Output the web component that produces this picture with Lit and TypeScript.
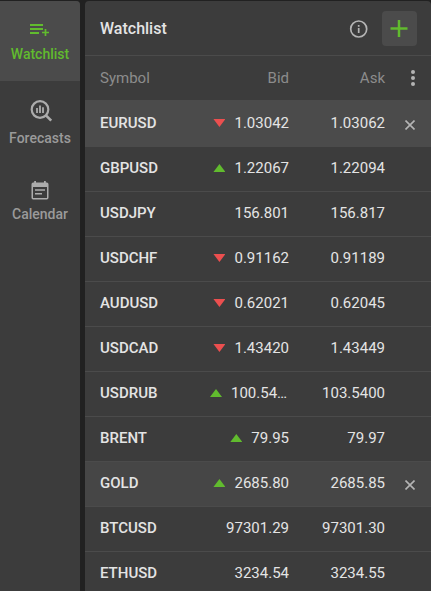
import { LitElement, html, css, svg, nothing } from "lit";
import { customElement, property } from "lit/decorators.js";

type Trend = "up" | "down" | "";

interface Quote {
  symbol: string;
  bid: string;
  ask: string;
  trend: Trend;
  state?: "selected" | "hovered";
}

const QUOTES: Quote[] = [
  { symbol: "EURUSD", bid: "1.03042", ask: "1.03062", trend: "down", state: "selected" },
  { symbol: "GBPUSD", bid: "1.22067", ask: "1.22094", trend: "up" },
  { symbol: "USDJPY", bid: "156.801", ask: "156.817", trend: "" },
  { symbol: "USDCHF", bid: "0.91162", ask: "0.91189", trend: "down" },
  { symbol: "AUDUSD", bid: "0.62021", ask: "0.62045", trend: "down" },
  { symbol: "USDCAD", bid: "1.43420", ask: "1.43449", trend: "down" },
  { symbol: "USDRUB", bid: "100.5400", ask: "103.5400", trend: "up" },
  { symbol: "BRENT", bid: "79.95", ask: "79.97", trend: "up" },
  { symbol: "GOLD", bid: "2685.80", ask: "2685.85", trend: "up", state: "hovered" },
  { symbol: "BTCUSD", bid: "97301.29", ask: "97301.30", trend: "" },
  { symbol: "ETHUSD", bid: "3234.54", ask: "3234.55", trend: "" },
];

const watchlistIcon = svg`<svg width="24" height="24" viewBox="0 0 24 24" fill="none" stroke="currentColor" aria-hidden="true">
  <path d="M2 7h13M2 11h13M2 15h9" stroke-width="2"/>
  <path d="M17.500 11v7M14 14.500h7" stroke-width="1.700"/></svg>`;

const forecastsIcon = svg`<svg width="28" height="28" viewBox="0 0 28 28" fill="none" stroke="currentColor" aria-hidden="true">
  <circle cx="14" cy="11.500" r="8.300" stroke-width="2.200"/>
  <path d="M19.700 17.200l5.500 5.500" stroke-width="2.600"/>
  <path d="M11 10v5M14 7.500v7.500M17 9.200v5.800" stroke-width="1.800"/></svg>`;

const calendarIcon = svg`<svg width="24" height="24" viewBox="0 0 24 24" fill="currentColor" aria-hidden="true">
  <path fill-rule="evenodd" d="M6.200 3h1.800v1.500h8V3h1.800v1.500h1a1.700 1.700 0 0 1 1.700 1.700v13.600a1.700 1.700 0 0 1-1.700 1.700H5.200a1.700 1.700 0 0 1-1.700-1.700V6.200a1.700 1.700 0 0 1 1.700-1.700h1zM5 9v11h14V9z"/>
  <path d="M7 11.300h10v1.500H7zM7 15h7v1.500H7z"/></svg>`;

@customElement("nav-item")
class NavItem extends LitElement {
  @property() label = "";
  @property({ attribute: false }) icon: unknown = nothing;
  @property({ type: Boolean, reflect: true }) active = false;

  static styles = css`
    :host { display: block; color: #acacac; }
    :host([active]) { background: #4b4b4b; color: #61bb2e; border-top-right-radius: 4px; }
    .item {
      display: flex; flex-direction: column; align-items: center; justify-content: flex-start; gap: 2px;
      width: 100%; min-height: 80px; padding: 17px 0 13px; border: 0; background: none;
      color: inherit; font: 500 14px/20px Roboto, sans-serif; cursor: pointer;
    }
    .label { color: #9a9a9a; }
    :host([active]) .label { color: inherit; }
    svg { display: block; }
  `;

  render() {
    return html`<button class="item" type="button" aria-pressed=${this.active}>
      ${this.icon}<span class="label">${this.label}</span>
    </button>`;
  }
}

@customElement("app-root")
class AppRoot extends LitElement {
  static styles = css`
    :host {
      display: flex; gap: 5px; box-sizing: border-box; height: 100vh; overflow: hidden;
      padding-top: 1px; background: #212121; color: #e4e4e4;
      font: 400 15px/20px Roboto, sans-serif;
    }
    .side { flex: none; width: 80px; background: #3c3c3c; border-top-right-radius: 4px; }
    .panel { flex: 1; min-width: 0; background: #3c3c3c; border-radius: 4px 4px 0 0; overflow: hidden; }
    .head {
      display: flex; align-items: center; box-sizing: border-box; height: 55px; padding: 1px 14px 0 15px;
      border-bottom: 1px solid #4b4b4b;
    }
    .title { flex: 1; margin: 0; font-size: 16px; font-weight: 500; }
    button { padding: 0; border: 0; background: none; color: #b4b4b4; cursor: pointer; }
    button svg { display: block; margin: auto; }
    .add { width: 35px; height: 35px; margin-left: 13px; border-radius: 4px; background: #4b4b4b; color: #61bb2e; }
    table { width: 100%; table-layout: fixed; border-collapse: separate; border-spacing: 0; }
    th, td { box-sizing: border-box; height: 45px; padding: 0; text-align: right; font-weight: 400; }
    thead th { height: 44px; color: #8c8c8c; }
    .symbol { padding-left: 15px; text-align: left; }
    tbody .symbol { font-weight: 500; }
    tbody th, tbody td { padding-bottom: 2px; border-bottom: 1px solid #4b4b4b; }
    .bid { width: 79px; }
    .ask { width: 96px; }
    .tools { width: 46px; }
    .menu { display: block; width: 24px; height: 24px; margin-left: 16px; }
    .remove { display: block; width: 24px; height: 24px; margin: 3px 0 0 13px; }
    .selected th, .selected td { height: 47px; padding-bottom: 0; background: #4b4b4b; }
    .hovered th, .hovered td { background: #464646; }
    .quote { display: flex; align-items: center; justify-content: flex-end; gap: 9px; }
    .value { min-width: 0; overflow: hidden; text-overflow: ellipsis; }
    .arrow { flex: none; width: 12px; height: 8px; }
    .up { background: #61bb2e; clip-path: polygon(50% 0, 100% 100%, 0 100%); }
    .down { background: #eb4f4f; clip-path: polygon(0 0, 100% 0, 50% 100%); }
  `;

  private row(q: Quote) {
    return html`<tr class=${q.state ?? ""}>
      <th class="symbol" scope="row">${q.symbol}</th>
      <td class="bid">
        <div class="quote">
          ${q.trend ? html`<span class="arrow ${q.trend}"></span>` : nothing}
          <span class="value">${q.bid}</span>
        </div>
      </td>
      <td class="ask">${q.ask}</td>
      <td class="tools">
        ${q.state
          ? html`<button class="remove" type="button" aria-label="Remove ${q.symbol}">
              <svg width="10" height="10" viewBox="0 0 10 10" stroke="currentColor" stroke-width="1.600"><path d="M.5.5l9 9M9.500.5l-9 9"/></svg>
            </button>`
          : nothing}
      </td>
    </tr>`;
  }

  render() {
    return html`
      <nav class="side">
        <nav-item label="Watchlist" .icon=${watchlistIcon} active></nav-item>
        <nav-item label="Forecasts" .icon=${forecastsIcon}></nav-item>
        <nav-item label="Calendar" .icon=${calendarIcon}></nav-item>
      </nav>
      <main class="panel">
        <header class="head">
          <h1 class="title">Watchlist</h1>
          <button type="button" aria-label="Information">
            <svg width="20" height="20" viewBox="0 0 20 20" fill="none" stroke="currentColor" stroke-width="1.700">
              <circle cx="9.700" cy="10" r="8"/><path d="M9.700 9v5M9.700 6v1.700"/>
            </svg>
          </button>
          <button class="add" type="button" aria-label="Add symbol">
            <svg width="19" height="19" viewBox="0 0 19 19" stroke="currentColor" stroke-width="2.500"><path d="M9 1v17M.5 9.500h17"/></svg>
          </button>
        </header>
        <table>
          <thead>
            <tr>
              <th class="symbol" scope="col">Symbol</th>
              <th class="bid" scope="col">Bid</th>
              <th class="ask" scope="col">Ask</th>
              <th class="tools">
                <button class="menu" type="button" aria-label="Columns">
                  <svg width="4" height="16" viewBox="0 0 4 16" fill="currentColor"><circle cx="2" cy="2" r="2"/><circle cx="2" cy="8" r="2"/><circle cx="2" cy="14" r="2"/></svg>
                </button>
              </th>
            </tr>
          </thead>
          <tbody>${QUOTES.map((q) => this.row(q))}</tbody>
        </table>
      </main>
    `;
  }
}
